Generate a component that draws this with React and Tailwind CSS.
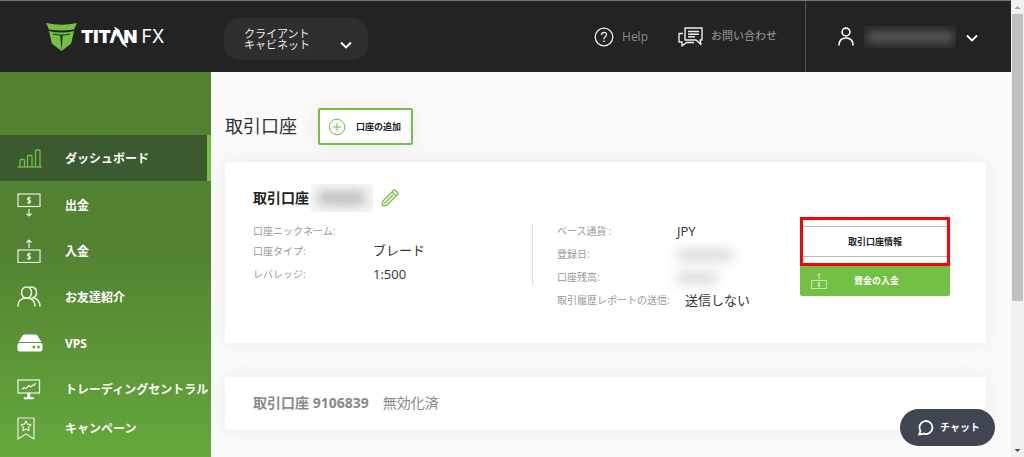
import clsx from "clsx";

const MENU = [
  { label: "ダッシュボード", icon: BarsIcon, active: true },
  { label: "出金", icon: WithdrawIcon },
  { label: "入金", icon: DepositIcon },
  { label: "お友達紹介", icon: FriendsIcon },
  { label: "VPS", icon: ServerIcon },
  { label: "トレーディングセントラル", icon: BoardIcon },
  { label: "キャンペーン", icon: BookmarkIcon, compact: true },
];

function BarsIcon() {
  return (
    <svg width="26" height="20" viewBox="0 0 26 20" fill="none" stroke="#74c044" strokeWidth="1.3">
      <path d="M.5 19h24.500" />
      <path d="M3 19v-6.500q0-1 1-1h2.500q1 0 1 1V19M10.500 19V8.500q0-1 1-1H14q1 0 1 1V19M18.500 19V3q0-1 1-1H22q1 0 1 1v16" />
    </svg>
  );
}

function Banknote({ y }) {
  return (
    <g transform={`translate(0 ${y})`}>
      <rect x="1" y="1" width="22" height="12.500" />
      <path d="M13.700 5.300q-.4-.8-1.700-.8-1.500 0-1.500 1.300 0 1 1.500 1.400t1.500 1.500Q13.500 10 12 10q-1.300 0-1.700-.9M12 3.500v7.500" />
    </g>
  );
}

function WithdrawIcon() {
  return (
    <svg width="24" height="24" viewBox="0 0 24 24" fill="none" stroke="#e8f0e2" strokeWidth="1.200">
      <Banknote y={0} />
      <path d="M12 16v7M9.500 20.500l2.500 2.500 2.500-2.500" />
    </svg>
  );
}

function DepositIcon({ size = 24 }) {
  return (
    <svg width={size} height={size} viewBox="0 0 24 24" fill="none" stroke="#e8f0e2" strokeWidth="1.200">
      <Banknote y={10} />
      <path d="M12 9V1M9.500 3.500L12 1l2.500 2.500" />
    </svg>
  );
}

function FriendsIcon() {
  return (
    <svg width="24" height="22" viewBox="0 0 24 22" fill="none" stroke="#eef5e9" strokeWidth="1.500" strokeLinecap="round">
      <ellipse cx="9.500" cy="6.500" rx="5" ry="5.500" />
      <path d="M1 20q.3-8 8.500-8T18 20" />
      <path d="M12.500 1.500q1-.5 2-.5 5 .5 5 5.500 0 4-3.500 5.200Q22.500 13 23 20" />
    </svg>
  );
}

function ServerIcon() {
  return (
    <svg width="26" height="18" viewBox="0 0 26 18" fill="#fff">
      <path d="M7.500.5h11q1 0 1.500.6L24.500 8h-23L6 1.100q.5-.6 1.500-.6z" />
      <path fillRule="evenodd" d="M2.500 9h21q2 0 2 2v4.500q0 2-2 2h-21q-2 0-2-2V11q0-2 2-2zm14.300 2.700a1.400 1.400 0 1 0 0 2.800 1.400 1.400 0 0 0 0-2.800zm4.700 0a1.400 1.400 0 1 0 0 2.800 1.400 1.400 0 0 0 0-2.800z" />
    </svg>
  );
}

function BoardIcon() {
  return (
    <svg width="24" height="21" viewBox="0 0 24 21" fill="none" stroke="#e8f0e2" strokeWidth="1.300">
      <rect x="1" y="1" width="21.500" height="13" />
      <path d="M5 10.500l2-2 2 1 3-3 1.500 1.500L16 6l1 .5 1.500-2.500" />
      <path d="M10.500 14h2.500v4.500h3.500V20h-9.500v-1.500h3.500z" fill="#fff" stroke="#fff" strokeWidth=".5" />
    </svg>
  );
}

function BookmarkIcon() {
  return (
    <svg width="19" height="23" viewBox="0 0 19 23" fill="none" stroke="#e8f0e2" strokeWidth="1.200" strokeLinejoin="round">
      <path d="M1 1h16v21l-8-5-8 5z" />
      <path d="M9 4l1.600 3.200 3.400.5-2.500 2.500.6 3.500L9 12l-3.100 1.700.6-3.500L4 7.700l3.400-.5z" />
    </svg>
  );
}

function ChevronIcon() {
  return (
    <svg width="12" height="8" viewBox="0 0 12 8" fill="none" stroke="#fff" strokeWidth="1.800">
      <path d="M1 1.500l5 5 5-5" />
    </svg>
  );
}

function Logo() {
  return (
    <a href="#home" aria-label="TITANFX" className="flex items-center gap-1">
      <svg width="31" height="28" viewBox="0 0 31 28" fill="#74c044">
        <path d="M0 0q15.500 3.500 31 0l-3 6.500q-12.500 2.200-25 0z" />
        <path d="M3 8q12.500 3.200 25 0l-2.800 12.500L15.500 28l-9.700-7.500z" />
        <path d="M14.300 12h2.400L15.500 28z" fill="#232323" />
        <path d="M7 11q4.200 1.100 8.500 1.100T24 11" fill="none" stroke="#232323" />
      </svg>
      <span className="relative flex font-['Inter'] text-lg leading-5 text-white">
        <span className="font-black">TITAN</span>
        <span className="ml-1 font-normal">FX</span>
        <svg className="absolute -top-1 left-8" width="16" height="26" viewBox="0 0 16 26">
          <path d="M2 13.500h4l3 7H0z" fill="#232323" />
          <path d="M1 3.500l5 3L14.500 25 9 21z" fill="#fff" />
        </svg>
      </span>
    </a>
  );
}

function Header() {
  return (
    <header className="flex h-[72px] shrink-0 items-stretch border-t border-[#777] bg-[#232323]">
      <div className="flex w-[224px] shrink-0 items-center pl-[46px]">
        <Logo />
      </div>
      <button
        type="button"
        className="mt-3 mb-2 flex h-[42px] w-36 items-center justify-between self-center rounded-2xl bg-[#2e2e2e] pr-4 pl-5"
      >
        <span className="text-left text-[11px] leading-[11px] text-[#eee]">
          <span className="block">クライアント</span>
          <span className="block">キャビネット</span>
        </span>
        <span className="pt-3">
          <ChevronIcon />
        </span>
      </button>
      <nav className="ml-auto flex items-center gap-[30px] pr-7 text-[#8a8a8a]">
        <a href="#help" className="flex items-center gap-2 text-xs">
          <svg width="20" height="20" viewBox="0 0 20 20" fill="none" stroke="#eee" strokeWidth="1.300">
            <circle cx="10" cy="10" r="8.800" />
            <path d="M7.500 8q0-2.700 2.500-2.700T12.500 7.700q0 1.300-1.300 2.100T10 12.200M10 13.500V15" />
          </svg>
          Help
        </a>
        <a href="#contact" className="flex items-center gap-2 text-[11px] font-medium">
          <svg width="25" height="20" viewBox="0 0 25 20" fill="none" stroke="#eee" strokeWidth="1.400" strokeLinejoin="round">
            <path d="M7 1h17v12h-2l1 4.500-5-4.500H7z" />
            <path d="M10 4.500h11M10 7.200h11M10 9.800h7" />
            <path d="M5 6.500H1V15h3v4l4.500-3.500H16" />
          </svg>
          お問い合わせ
        </a>
      </nav>
      <button type="button" aria-label="アカウント" className="flex w-[206px] shrink-0 items-center border-l border-[#555] pl-8">
        <svg width="16" height="19" viewBox="0 0 16 19" fill="none" stroke="#fff" strokeWidth="1.600">
          <circle cx="8" cy="5" r="3.900" />
          <path d="M1 18.500q0-7.500 7-7.500t7 7.500" />
        </svg>
        <span className="ml-2.5 block h-[22px] w-[92px] overflow-hidden bg-[#292929] px-1 py-1.5">
          <span className="block h-2.5 bg-[#606060] blur-[5px]" />
        </span>
        <span className="ml-2.5 pt-0.5">
          <ChevronIcon />
        </span>
      </button>
    </header>
  );
}

function Sidebar() {
  return (
    <aside className="w-[211px] shrink-0 bg-linear-to-b from-[#528232] from-45% to-[#66a83b] pt-[63px]">
      <nav>
        {MENU.map(({ label, icon: Icon, active, compact }) => (
          <a
            key={label}
            href="#menu"
            className={clsx(
              "flex items-center pl-[17px] text-xs font-bold whitespace-nowrap text-white",
              compact ? "h-8" : "h-[46px]",
              active && "mb-px border-r-4 border-[#74c044] bg-[#3c5a30]"
            )}
          >
            <span className="w-12 shrink-0">
              <Icon />
            </span>
            <span className="pt-0.5">{label}</span>
          </a>
        ))}
      </nav>
    </aside>
  );
}

function Row({ label, className, children }) {
  return (
    <div className={clsx("flex items-center whitespace-nowrap", className)}>
      <dt className="min-w-[120px] text-[10px] text-[#999]">{label}</dt>
      <dd className="text-[13px] text-[#333]">{children}</dd>
    </div>
  );
}

function Redacted({ className }) {
  return <span className={clsx("block h-3 bg-[#dadada] blur-[6px]", className)} />;
}

function AccountCard() {
  return (
    <section className="bg-white pt-[22px] pr-9 pb-[31px] pl-7 shadow-[0_0_20px_rgba(0,0,0,0.07)]">
      <div className="flex h-7 items-center">
        <h2 className="text-sm font-bold text-[#222]">取引口座</h2>
        <span className="ml-0.5 block h-7 w-[62px] overflow-hidden bg-[#f6f6f6] px-2 py-2">
          <span className="block h-3 bg-[#b4b4b4] blur-[6px]" />
        </span>
        <button type="button" aria-label="編集" className="ml-2">
          <svg width="18" height="18" viewBox="0 0 18 18" fill="none" stroke="#74c044" strokeWidth="1.400" strokeLinejoin="round">
            <path d="M1.500 16.500v-4L12.500 1.500q1-1 2 0l2 2q1 1 0 2L5.500 16.500zM11 3l4 4M3.500 14.500l8.500-8.500" />
          </svg>
        </button>
      </div>
      <div className="mt-2 grid grid-cols-[280fr_267fr_150px]">
        <dl className="mt-[5px] h-[60px] border-r border-[#ddd]">
          <Row label="口座ニックネーム:" className="-mt-1 h-5" />
          <Row label="口座タイプ:" className="h-5">ブレード</Row>
          <Row label="レバレッジ:" className="h-[27px]">1:500</Row>
        </dl>
        <dl className="pl-6">
          <Row label="ベース通貨 :" className="h-[23px]">JPY</Row>
          <Row label="登録日:" className="h-[23px]">
            <Redacted className="w-14" />
          </Row>
          <Row label="口座残高:" className="h-[23px]">
            <Redacted className="w-10" />
          </Row>
          <Row label="取引履歴レポートの送信:" className="h-[23px]">
            <span className="pl-2">送信しない</span>
          </Row>
        </dl>
        <div className="flex flex-col gap-2 pt-1.5">
          <div className="relative">
            <button type="button" className="block h-[31px] w-full rounded-xs border border-[#bbb] bg-white text-[9px] font-bold text-[#222]">
              取引口座情報
            </button>
            <span className="pointer-events-none absolute inset-x-0 -inset-y-[9px] border-3 border-[#fa0008]" />
          </div>
          <button type="button" className="flex h-[31px] w-full items-center rounded-xs bg-[#74c044] pl-[11px] text-[9px] font-bold text-white">
            <DepositIcon size={16} />
            <span className="flex-1 pr-6 text-center">資金の入金</span>
          </button>
        </div>
      </div>
    </section>
  );
}

function ScrollRail() {
  return (
    <div className="flex w-[13px] shrink-0 flex-col items-center justify-between bg-[#f1f1f1] px-px">
      <svg width="11" height="14" viewBox="0 0 11 14">
        <path d="M2.500 9h6l-3-3z" fill="#a3a3a3" />
      </svg>
      <div className="w-full flex-1">
        <div className="h-[67%] bg-[#c1c1c1]" />
      </div>
      <svg width="11" height="14" viewBox="0 0 11 14">
        <path d="M2.500 6h6l-3 3z" fill="#505050" />
      </svg>
    </div>
  );
}

export default function App() {
  return (
    <div className="flex h-screen overflow-hidden bg-[#fafafa] font-['Open_Sans','Noto_Sans_CJK_JP',sans-serif]">
      <div className="relative flex min-w-0 flex-1 flex-col">
        <Header />
        <div className="flex min-h-0 flex-1">
          <Sidebar />
          <main className="min-w-0 flex-1 overflow-hidden pt-9 pr-[25px] pl-3.5">
            <div className="mb-[17px] flex items-center gap-[21px]">
              <h1 className="pb-0.5 text-lg leading-6 text-[#333]">取引口座</h1>
              <button
                type="button"
                className="flex h-[37px] w-[95px] items-center gap-2.5 rounded-xs border-2 border-[#74c044] bg-white pl-2 text-[9px] font-bold whitespace-nowrap text-[#222] shadow-[0_0_20px_rgba(0,0,0,0.07)]"
              >
                <svg width="18" height="18" viewBox="0 0 18 18" fill="none" stroke="#74c044">
                  <circle cx="9" cy="9" r="7.800" />
                  <path d="M9 5v8M5 9h8" />
                </svg>
                口座の追加
              </button>
            </div>
            <div className="flex flex-col gap-[34px]">
              <AccountCard />
              <section className="flex h-[53px] items-center gap-3.5 bg-white px-7 pb-0.5 text-sm text-[#8a8a8a] shadow-[0_0_20px_rgba(0,0,0,0.07)]">
                <h2 className="font-bold">取引口座 9106839</h2>
                <span>無効化済</span>
              </section>
            </div>
          </main>
        </div>
        <button
          type="button"
          className="absolute right-4 bottom-[11px] flex h-[37px] w-[95px] items-center gap-1.5 rounded-full bg-[#3f4652] pl-[18px] text-[10px] font-bold text-white"
        >
          <svg width="16" height="17" viewBox="0 0 16 17" fill="none" stroke="#fff" strokeWidth="1.800" strokeLinejoin="round">
            <path d="M1 15.500l1.500-3.500A6.500 6.500 0 1 1 6 14.700z" />
          </svg>
          チャット
        </button>
      </div>
      <ScrollRail />
    </div>
  );
}
